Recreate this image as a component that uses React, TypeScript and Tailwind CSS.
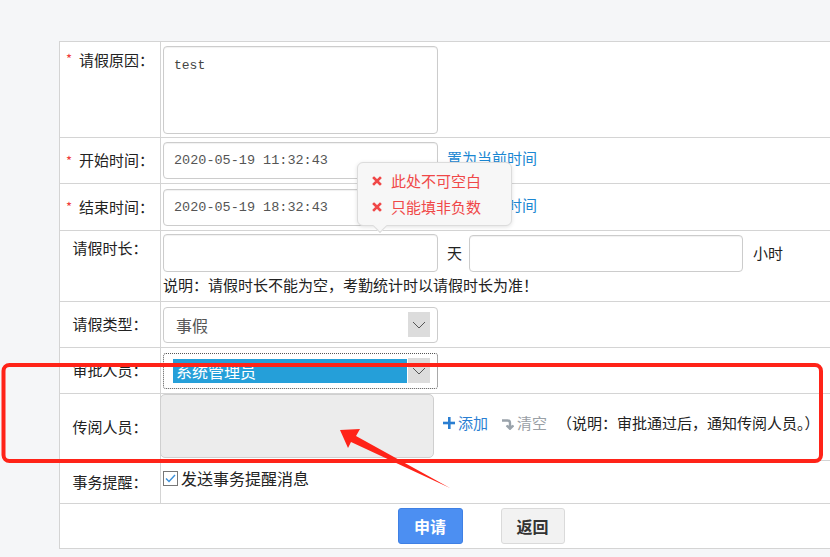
import type { ReactNode } from 'react';

const cjk = "font-['Noto_Sans_CJK_SC',sans-serif]";
const mono = "font-['Liberation_Mono','Noto_Sans_CJK_SC',monospace]";

function Row({ label, required, cls, labelTop, children }: { label: string; required?: boolean; cls: string; labelTop?: string; children?: ReactNode }) {
  return (
    <div className={`flex border-b border-[#d4d4d4] ${cls}`}>
      <div className={`w-[101px] shrink-0 border-r border-[#d4d4d4] flex justify-center text-[15px] text-[#222] ${labelTop ? `items-start ${labelTop}` : 'items-center'}`}>
        {required && <span className="text-[#f03c3c] mr-[7px] text-[13px]">*</span>}
        <span>{label}</span>
      </div>
      <div className="flex-1 pl-[2px] flex">{children}</div>
    </div>
  );
}

function TimeRow({ label, value }: { label: string; value: string }) {
  return (
    <div className="flex items-center">
      <input
        readOnly
        value={value}
        className={`w-[275px] h-[37px] border border-[#ccc] rounded-[4px] pl-[10px] text-[13.5px] text-[#555] bg-white outline-none shadow-[inset_0_1px_1px_rgba(0,0,0,0.06)] ${mono}`}
      />
      <span className="ml-[9px] -mt-[4px] text-[15px] text-[#1b87d2]">{label}</span>
    </div>
  );
}

function Arrow() {
  return (
    <span className="w-[22px] h-[25px] bg-[#dcdcdc] flex items-center justify-center">
      <svg width="14" height="8" viewBox="0 0 14 8" fill="none" stroke="#555" strokeWidth="1">
        <path d="M1 1l6 6 6-6" />
      </svg>
    </span>
  );
}

function Cross() {
  return (
    <svg width="10" height="10" viewBox="0 0 10 10" stroke="#f04848" strokeWidth="2.6" strokeLinecap="square">
      <path d="M2 2l6 6M8 2l-6 6" />
    </svg>
  );
}

export default function App() {
  return (
    <div className={`relative w-[830px] h-[557px] overflow-hidden bg-[#f5f6f8] ${cjk}`}>
      <div className="pt-[41px] pl-[59px]">
        <div className="w-[843px] bg-white border-t border-l border-[#d4d4d4]">
          <Row label="请假原因：" required cls="h-[96px]" labelTop="pt-[7px]">
            <textarea
              readOnly
              defaultValue="test"
              className={`mt-[4px] w-[275px] h-[88px] border border-[#ccc] rounded-[4px] px-[10px] pt-[9px] text-[13px] text-[#444] resize-none outline-none shadow-[inset_0_1px_1px_rgba(0,0,0,0.06)] ${mono}`}
            />
          </Row>
          <Row label="开始时间：" required cls="h-[46px]">
            <TimeRow label="置为当前时间" value="2020-05-19 11:32:43" />
          </Row>
          <Row label="结束时间：" required cls="h-[47px]">
            <TimeRow label="置为当前时间" value="2020-05-19 18:32:43" />
          </Row>
          <Row label="请假时长：" cls="h-[71px]" labelTop="pt-[6px]">
            <div className="pt-[3px] text-[15px] text-[#222]">
              <div className="flex items-center">
                <div className="w-[275px] h-[38px] border border-[#ccc] rounded-[4px] shadow-[inset_0_1px_1px_rgba(0,0,0,0.06)]" />
                <span className="ml-[9px]">天</span>
                <div className="ml-[7px] w-[274px] h-[37px] border border-[#ccc] rounded-[4px] shadow-[inset_0_1px_1px_rgba(0,0,0,0.06)]" />
                <span className="ml-[10px]">小时</span>
              </div>
              <div className="mt-[3px] leading-[20px]">说明：请假时长不能为空，考勤统计时以请假时长为准！</div>
            </div>
          </Row>
          <Row label="请假类型：" cls="h-[46px]">
            <div className="flex items-center">
              <div className="w-[275px] h-[36px] border border-[#ccc] rounded-[4px] flex items-center justify-between pl-[12px] pr-[7px]">
                <span className="text-[16px] text-[#555]">事假</span>
                <Arrow />
              </div>
            </div>
          </Row>
          <Row label="审批人员：" cls="h-[46px]">
            <div className="flex items-center">
              <div className="w-[275px] h-[36px] border border-dotted border-[#555] rounded-[3px] flex items-center justify-between pl-[9px] pr-[7px]">
                <span className="w-[234px] h-[24px] bg-[#259fd9] text-white text-[16px] leading-[24px] pl-[3px]">系统管理员</span>
                <Arrow />
              </div>
            </div>
          </Row>
          <Row label="传阅人员：" cls="h-[67px]">
            <div className="flex items-start">
              <div className="-ml-[3px] w-[274px] h-[64px] bg-[#ececec] border border-[#cfcfcf] rounded-[5px]" />
              <div className="ml-[9px] h-[58px] flex items-center text-[15px]">
                <svg width="12" height="12" viewBox="0 0 12 12" fill="#2a7ed2">
                  <rect x="5" y="0" width="2.6" height="12" />
                  <rect x="0" y="4.7" width="12" height="2.6" />
                </svg>
                <span className="ml-[3px] text-[#2a7ed2]">添加</span>
                <svg className="ml-[13px]" width="13" height="13" viewBox="0 0 13 13" fill="none" stroke="#9aa3ab" strokeWidth="2.4">
                  <path d="M1 3.5h5.5a2.5 2.5 0 0 1 2.5 2.5v5" />
                  <path d="M5.5 8.5l3.5 3.5 3.5-3.5" strokeWidth="2" fill="#9aa3ab" />
                </svg>
                <span className="ml-[3px] text-[#9aa0a6]">清空</span>
                <span className="ml-[10px] text-[#222]">（说明：审批通过后，通知传阅人员。）</span>
              </div>
            </div>
          </Row>
          <Row label="事务提醒：" cls="h-[43px]">
            <div className="flex items-center pb-[8px]">
              <span className="w-[15px] h-[15px] border border-[#777] bg-white flex items-center justify-center">
                <svg width="11" height="9" viewBox="0 0 11 9" fill="none" stroke="#3b8fd8" strokeWidth="1.4">
                  <path d="M1 4.5l3 3 6-6.5" />
                </svg>
              </span>
              <span className="ml-[3px] text-[16px] text-[#222]">发送事务提醒消息</span>
            </div>
          </Row>
          <div className="h-[45px] border-b border-[#d4d4d4] flex items-center justify-center gap-[38px] pb-[1px]">
            <button className="w-[65px] h-[36px] rounded-[3px] bg-[#4c8ff2] border border-[#3f80e4] text-white text-[16px] font-bold">申请</button>
            <button className="w-[64px] h-[36px] rounded-[3px] bg-[#f2f2f2] border border-[#dadada] text-[#333] text-[16px] font-bold">返回</button>
          </div>
        </div>
      </div>

      <div className="absolute left-[357px] top-[162px] w-[155px] h-[64px] bg-[#f7f7f7] border border-[#dcdcdc] rounded-[6px] shadow-[0_1px_4px_rgba(0,0,0,0.12)] pt-[5px] text-[15px] text-[#f04848]">
        <div className="h-[26px] flex items-center pl-[14px]">
          <Cross />
          <span className="ml-[9px]">此处不可空白</span>
        </div>
        <div className="h-[26px] flex items-center pl-[14px]">
          <Cross />
          <span className="ml-[9px]">只能填非负数</span>
        </div>
        <span className="absolute left-[17px] -bottom-[6px] w-[10px] h-[10px] rotate-45 bg-[#f7f7f7] border-r border-b border-[#dcdcdc]" />
      </div>

      <svg className="absolute left-0 top-0 pointer-events-none" width="830" height="557" viewBox="0 0 830 557">
        <rect x="3.5" y="365" width="817.5" height="96" rx="6" fill="none" stroke="#ff2318" strokeWidth="4" />
        <polygon points="340,430 360,429 356,436 450,488 351,442 348,448" fill="#ff2318" />
      </svg>
    </div>
  );
}
